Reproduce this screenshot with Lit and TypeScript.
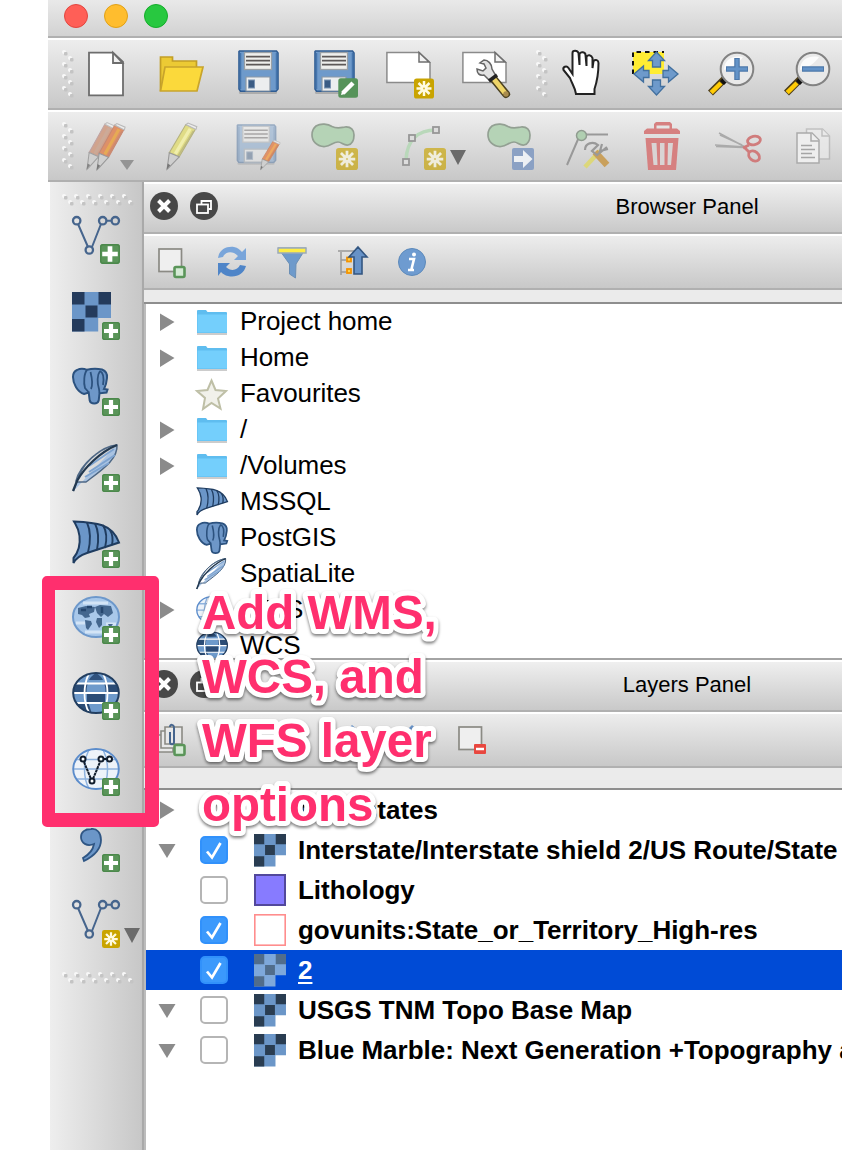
import { LitElement, html, svg, css, nothing } from "lit";
import { customElement, property } from "lit/decorators.js";

const plusBadge = (x: number, y: number, s: number) => svg`
  <g transform="translate(${x} ${y}) scale(${s / 18})">
    <rect width="18" height="18" rx="2.6" fill="#5a9559"/>
    <rect x=".7" y=".7" width="16.6" height="16.6" rx="2.2" fill="none" stroke="#4b884b" stroke-width="1.2"/>
    <path d="M9 2v14M2 9h14" stroke="#fff" stroke-width="4.2"/>
  </g>`;

const starBadge = (x: number, y: number, s: number) => svg`
  <g transform="translate(${x} ${y}) scale(${s / 20})">
    <rect width="20" height="20" rx="2.6" fill="#c9a400"/>
    <path d="M10 2.500v15M2.500 10h15M4.500 4.500l11 11M15.500 4.500l-11 11" stroke="#fffbe0" stroke-width="2.500"/>
    <circle cx="10" cy="10" r="3.500" fill="#fffbe0"/>
    <circle cx="10" cy="10" r="1" fill="#d8bd40"/>
  </g>`;

const floppy = svg`
  <rect x="5" y="41" width="38" height="3" rx="1.500" fill="#888" opacity=".5"/>
  <path d="M5.500 1h37l1.500 2v36l-2 2.300H6.500L5 39V1.500z" fill="#6e9acb" stroke="#2f5c93" stroke-width="1.600"/>
  <path d="M6.500 3v36M42.500 3v36" stroke="#4575ad" stroke-width="1.500"/>
  <rect x="10.500" y="2.500" width="27" height="17" fill="#efefed" stroke="#9aa0a6" stroke-width="1.300"/>
  <path d="M12 6.700h24M12 10.700h24M12 14.700h24" stroke="#5d5858" stroke-width="1.700"/>
  <path d="M12 41V27h24v14z" fill="#eceeef" stroke="#8b98a5" stroke-width="1.200"/>
  <rect x="14.500" y="30" width="6" height="8" fill="#3b5c84" stroke="#7b94b2" stroke-width="1"/>`;

const sheet = svg`
  <path d="M.9 2.500H33l11 10v20H.9z" fill="#fff" stroke="#8a8a8a" stroke-width="1.500"/>
  <path d="M33 2.500V12h10z" fill="#f2f2f2" stroke="#6f6f6f" stroke-width="1.500"/>`;

const blob = svg`
  <path d="M6 4C11 1 18 2 22 4.500c5 2.500 9 1 13 .5 6-.5 9 3 9 8s-1 9-6 10c-5 .5-6-3-10-3-5 0-7 4-13 4.500C7 25 2 19 2 13c0-4 1.500-7 4-9z"
    fill="#b5d3b6" stroke="#93a093" stroke-width="1.700"/>`;

const pencil = (body: string, dark: string, mid: string) => svg`
  <path d="M18 2l9 4-15 27-9-4z" fill="${body}" stroke="${dark}" stroke-width="1"/>
  <path d="M22 6L8.500 30" stroke="${mid}" stroke-width="3"/>
  <path d="M25 8L11 32" stroke="${dark}" stroke-width="1.500" opacity=".7"/>
  <path d="M3 29l9 4-8.500 9.500L1 45z" fill="#cfcfcf" stroke="#999" stroke-width="1"/>
  <path d="M1.500 39.500L4 41l-3.500 4.500z" fill="#777"/>
  <path d="M18 2l2-1.500 8 3.500-.8 2.800z" fill="#ececec" stroke="#b9b9b9" stroke-width="1"/>`;

const vector = (c: string) => svg`
  <g stroke="${c}" stroke-width="2" fill="none">
    <path d="M6 8l10 23M20 31L29 8M34 4.700h6"/>
    <circle cx="4.700" cy="4.700" r="3.700" stroke-width="2.300"/><circle cx="30.700" cy="4.700" r="3.700" stroke-width="2.300"/>
    <circle cx="43.300" cy="4.700" r="3.700" stroke-width="2.300"/><circle cx="17.300" cy="34" r="3.700" stroke-width="2.300"/>
  </g>`;

const elephant = svg`
  <path d="M5 2C8 .3 12 .5 15 1.800 20 .5 25 .5 30 1.500c4 1.500 5.500 4 5 8.500-.3 4-1.500 8-3 11l3.500.5-1 3-7 .8-.8 7.200c-1 4-8 4-9 0l-1-8-4.500 1.500C5 24 1 15 1 9 1 5 2.500 3 5 2z" fill="#6e97c8" stroke="#2c527f" stroke-width="2"/>
  <path d="M15 2c-3 3-3.500 13-2 18l3.500 4M19 21c2-4 .5-13-.5-17M28 3c-3 4-3 12-1 18l.5 4M28 3c4 2 4 8 3 14" fill="none" stroke="#2c527f" stroke-width="1.800"/>`;

const feather = svg`
  <path d="M45 1C33 2 14 14 7 32L1.500 47M45 1c1 14-14 24-31 37H6L4 37C8 20 30 2 45 1z" fill="#a9c3e2" stroke="#4f6885" stroke-width="1.500"/>
  <path d="M42 5L17 22M43 11L17 28M37 19L13 33" stroke="#7da3d0" stroke-width="2"/>
  <path d="M45 1C28 8 12 24 5 37l-4 10" fill="none" stroke="#22384f" stroke-width="2.200"/>`;

const fin = svg`
  <path d="M2 1.500c22 1 38 2 45 21L15 33C9 35 4 38 1.500 43v-5c5-6 7-13 6-22C6.500 8 4 5 2 1.500z" fill="#6b96c8" stroke="#1f3c60" stroke-width="2"/>
  <path d="M15 2.500c4 9 4 18 1 30M23 3.500c4 8 4 16 2 26.500M31 5c4 7 4 15 2 23M38 10c3 5 3 10 2 15" stroke="#1f3c60" stroke-width="1.900" fill="none"/>`;

const globeGrid = svg`
  <path d="M17 1.500c-6 12-6 28 0 39M31 1.500c6 12 6 28 0 39M4 11.500h40M1 21h46M4 31h40" fill="none"/>`;

const globeWms = svg`
  <ellipse cx="24" cy="21" rx="23" ry="20" fill="#a9c8ea" stroke="#6d98cb" stroke-width="2"/>
  <path d="M11 7h25M4 27h9M34 28h10M13 36h22" stroke="#d3e4f6" stroke-width="3"/>
  <path d="M6 12l8-2 9 1-1 5-5 2 1 3-5 1-3-3-4-1zM13 24l6 1 1 3-4 6-2-2zM23 11l5-2 11 1 2 7-5 4-4-3-3 3-4-4zM25 22h5v7l-3 3-3-6zM36 28h5l-3 4z" fill="#44678f"/>
  <path d="M15 11h5M30 11v6M9 14h5" stroke="#25466e" stroke-width="2.500"/>`;

const globeWcs = svg`
  <ellipse cx="24" cy="21" rx="22.800" ry="20" fill="#6e9acb"/>
  <path d="M17 8C18 5 21 3 24 1c3 2 6 4 7 7z" fill="#2f527e"/>
  <path d="M4.500 11.500h11.500c-1.500 3-1.500 6-1.500 9.500H1.500c0-4 1-7 3-9.500zM43.500 11.500H32c1.500 3 1.500 6 1.500 9.500h13c0-4-1-7-3-9.500zM15 21h18v10H15zM5 31h11.500l3 9.500C12 39 7 35 5 31z" fill="#2b4c76"/>
  <g stroke="#fff" stroke-width="1.800">${globeGrid}</g>
  <ellipse cx="24" cy="21" rx="22.800" ry="20" fill="none" stroke="#223e60" stroke-width="2"/>`;

const globeWfs = svg`
  <ellipse cx="24" cy="21" rx="22.800" ry="20" fill="#eef3f9"/>
  <g stroke="#8fb3de" stroke-width="1.500">${globeGrid}</g>
  <ellipse cx="24" cy="21" rx="22.800" ry="20" fill="none" stroke="#5b8ccb" stroke-width="1.900"/>
  <g stroke="#111c2b" stroke-width="2" fill="#fff"><path d="M12 14l7 17M21 31l7-17M31 11h4" stroke-dasharray="3 .6"/>
  <circle cx="11" cy="11" r="2.500"/><circle cx="29" cy="11" r="2.500"/><circle cx="37.500" cy="11" r="2.500"/><circle cx="20" cy="33" r="2.500"/></g>`;

const rasterCells = (dark: string, light: string) => svg`
  <path d="M0 0h39v26H26.200V39.500H0z" fill="${light}"/>
  <path d="M0 0h12.500v12.500H0zM26.500 0H39v12.500H26.500zM13.500 13.500h12v12h-12zM0 27h12.500v12.500H0z" fill="${dark}"/>`;

const lens = svg`
  <path d="M16.500 29L2.500 43" stroke="#4d3d1a" stroke-width="7"/>
  <path d="M13 33L3.200 42.700" stroke="#ffcb05" stroke-width="4.500"/>
  <path d="M12 31l5-5 4 4-5 5z" fill="#111"/>
  <circle cx="29" cy="19" r="16.300" fill="#e9e9e9" stroke="#828282" stroke-width="2"/>
  <path d="M16 20C16 10 24 5 35 7c-4 6-11 11-19 13z" fill="#fff" opacity=".8"/>`;

const addGlyph = svg`<rect x="17" y="19" width="10" height="10" rx="1.500" fill="#d5ead5" stroke="#5a9559" stroke-width="2.600"/>`;

const icons: Record<string, unknown> = {
  doc: svg`<path d="M7 2.700h24L41 12v33.300H7z" fill="#fff" stroke="#6d6d6d" stroke-width="1.800"/><path d="M31 2.700V13h9.500z" fill="#f0f0f0" stroke="#6d6d6d" stroke-width="1.800"/>`,
  folder: svg`<path d="M2.500 41V7h12v4h24v6" fill="#ecca34" stroke="#c29e26" stroke-width="1.700"/><path d="M7 17h38l-6 24H2.500z" fill="#fbd93b" stroke="#c8a42c" stroke-width="1.700"/>`,
  save: floppy,
  saveAs: svg`${floppy}<rect x="28.300" y="28.300" width="19.700" height="19.500" rx="2.500" fill="#56935a"/><path d="M33 43l10-10" stroke="#fff" stroke-width="4.500"/><path d="M32 41l3 3-4 1z" fill="#fff"/>`,
  composer: svg`${sheet}${starBadge(28, 28.500, 20)}`,
  manager: svg`${sheet}<path d="M30 27l14 17" stroke="#4b4120" stroke-width="8" stroke-linecap="round"/><path d="M31 28l12 15" stroke="#efd568" stroke-width="5"/><circle cx="44" cy="44" r="2.700" fill="#a98c4d"/>
    <path d="M22 10c4 0 8 4 8 9l4 7-6 5-6-6c-5 1-7-2-7-6l6 2 3-3-2-4-4-1z" fill="#e2e2e2" stroke="#646464" stroke-width="1.500"/><path d="M27 31l8-6" stroke="#222" stroke-width="3.500"/>`,
  hand: svg`<path transform="translate(6 0)" d="M14 44c-1-7-4-10-6-16L1.500 20c-1-3 3-5 5-2l4 6V3c0-3 5-3 6 0l1 12V4c1-3 6-2 6 1l1 11V7c1-3 5-2 6 1v10l1-7c2-2 5-1 5 2 0 10-1 17-4 26v5z" fill="#fff" stroke="#222" stroke-width="2"/>`,
  pan: svg`<path d="M1 2h31v22H1z" fill="#ffed33"/><path d="M1 24V2h31" fill="none" stroke="#111" stroke-width="2" stroke-dasharray="4.500 4"/>
    <g fill="#6e9acb" stroke="#42709f" stroke-width="1.300"><path d="M24.500 2l8 8.500h-4V17h-8v-6.500h-4z"/><path d="M24.500 45l8-8.500h-4V30h-8v6.500h-4z"/><path d="M2 24l9.500-8v4.500H17v7h-5.500V32z"/><path d="M46 24l-9.500-8v4.500H31v7h5.500V32z"/></g>`,
  zoomIn: svg`${lens}<path d="M29 8v22M18 19h22" stroke="#4d78aa" stroke-width="5.500"/><path d="M29 9v20M19 19h20" stroke="#6393c8" stroke-width="3"/>`,
  zoomOut: svg`${lens}<path d="M18 19h22" stroke="#4d78aa" stroke-width="5.500"/><path d="M19 19h20" stroke="#6393c8" stroke-width="3"/>`,

  pencils: svg`<g transform="translate(4 0) scale(1.05)" opacity=".85">${pencil("#cf9a80", "#b99", "#c9a18c")}</g><g transform="translate(14 1) scale(1.04)">${pencil("#de9068", "#c78872", "#e6aa55")}</g>
    <path d="M38 38h14l-7 10z" fill="#949494"/>`,
  pencil: svg`<g transform="translate(8 .5) scale(1.1 1.04)">${pencil("#e0dc86", "#b5b27e", "#f0eeac")}</g>`,
  saveEdit: svg`<g opacity=".42" transform="translate(-1.500 2) scale(.98 .93)">${floppy}</g><g transform="translate(26 18) scale(.72 .66)">${pencil("#e09268", "#c78560", "#ecaa60")}</g>`,
  blobStar: svg`${blob}<g opacity=".65">${starBadge(26, 26, 22)}</g>`,
  curve: svg`<path d="M8 38C9 18 20 8 38 8" fill="none" stroke="#b9d8ba" stroke-width="3.500"/><g fill="#ddd" stroke="#979797" stroke-width="1.800"><rect x="5" y="37" width="6" height="6"/><rect x="11" y="13" width="6" height="6"/><rect x="35" y="5" width="6" height="6"/></g><g opacity=".65">${starBadge(26, 26, 22)}</g>`,
  blobMove: svg`${blob}<rect x="26" y="26" width="22" height="22" rx="2" fill="#8ba1c4"/><path d="M28 34h9v-6l9.500 9-9.500 9v-6h-9z" fill="#edf0f4"/>`,
  node: svg`<path d="M5 43L17 15M23 12.500h23" stroke="#999" stroke-width="2"/><circle cx="19.500" cy="13.500" r="5" fill="#b0cfb1" stroke="#909c90" stroke-width="1.500"/>
    <path d="M23 45l15-16" stroke="#dcd77a" stroke-width="4.500"/><path d="M33 30l12 13" stroke="#c9a05c" stroke-width="6.500"/><path d="M23 28c0-7 8-9 13-5l-6 6 5 4 10-8M40 22l-2 7 8-2" fill="none" stroke="#999" stroke-width="2.200"/>`,
  trash: svg`<g fill="#d68080"><path d="M6 12V9l3-2.500h7V2l2-2h14l2 2v4.500h5l3 2.500v3zM18.500 3.500v3h13v-3z" fill-rule="evenodd"/><path d="M7.500 16h33L38 48H10z"/></g><path d="M13.500 21h5l1 22h-4zM22 21h4.500v22H22zM30 21h5l-2 22h-3.500z" fill="#d9d4d4"/>`,
  scissors: svg`<path d="M5 11l27 14.500M1 23l31 2M6 13l22 10M2 24.500l27 1" stroke="#aaa" stroke-width="1.600"/><g fill="none" stroke="#d07c7c" stroke-width="2.800"><ellipse cx="40" cy="18.500" rx="6.500" ry="4.200" transform="rotate(-12 40 18.500)"/><ellipse cx="40" cy="34" rx="6" ry="4.500" transform="rotate(40 40 34)"/><path d="M29 26l6-3M31 26l4 4"/></g>`,
  copy: svg`<g fill="#eee" stroke="#aaa" stroke-width="1.500"><g opacity=".6"><path d="M16.500 7h16l7 7v23h-23z"/><path d="M32 7v7h7"/></g><path d="M7 11h15l7 7v23H7z"/><path d="M21 11v8h8"/></g><path d="M11 23.500h11M11 27.500h14M11 31.500h11M11 35.500h14" stroke="#a5a5a5" stroke-width="1.500"/>`,

  addVector: svg`${vector("#46658d")}${plusBadge(28, 28, 20)}`,
  addRaster: svg`${rasterCells("#243b5c", "#6b96c8")}${plusBadge(30, 30, 18)}`,
  addPostgis: svg`${elephant}${plusBadge(30, 30, 18)}`,
  addSpatialite: svg`${feather}${plusBadge(30, 30, 18)}`,
  addMssql: svg`${fin}${plusBadge(30, 30, 18)}`,
  addWms: svg`${globeWms}${plusBadge(30, 30, 18)}`,
  addWcs: svg`${globeWcs}${plusBadge(30, 30, 18)}`,
  addWfs: svg`${globeWfs}${plusBadge(30, 30, 18)}`,
  addText: svg`<path d="M19 5c6-1 10 4 10 11 0 9-7 16-17 21l-1-3c7-4 10-8 11-14-7 3-13-1-13-7 0-5 4-8 10-8z" fill="#6b96c8" stroke="#2f5684" stroke-width="1.800"/>${plusBadge(30, 30, 18)}`,
  newVector: svg`${vector("#46658d")}${starBadge(30, 30, 18)}`,

  close: svg`<circle cx="14" cy="14" r="14" fill="#484848"/><path d="M8.500 8.500l11 11M19.500 8.500l-11 11" stroke="#fff" stroke-width="4"/>`,
  float: svg`<circle cx="14" cy="14" r="14" fill="#484848"/><g fill="none" stroke="#fff" stroke-width="1.800"><path d="M11.500 12V9H21v8h-2.500"/><rect x="7" y="12.500" width="11" height="8.500"/></g>`,

  addSel: svg`<rect x="3" y="3" width="22.500" height="22.500" fill="#efefef" stroke="#8b8a84" stroke-width="1.700"/><g transform="translate(1.500 2)">${addGlyph}</g>`,
  refresh: svg`<path d="M2 12C3 4 10 0 18 1c4 .5 6 3 8 5l4-4v12H18l4-4c-6-6-13-4-15 1z" fill="#79a5da"/><path d="M30 20c-2 8-10 12-18 10-3-.5-5-2-7-4l-3 4V17h12l-4 4c5 5 12 3 14-2z" fill="#4f85c8"/>`,
  filter: svg`<path d="M2 2h28L20 18l-.5 14-6-4V18z" fill="#6e9acb" stroke="#6b8fb5" stroke-width="1"/><path d="M2 2h28v5H2z" fill="#ffee45" stroke="#9cabb8" stroke-width="1.500"/>`,
  collapse: svg`<path d="M2 5h17M5 6v23M5 14h5M5 26h5" stroke="#999" stroke-width="1.500"/><rect x="11" y="11.500" width="4" height="4" fill="#ffd34d" stroke="#f49300" stroke-width="1.800"/><rect x="11" y="23" width="4" height="4" fill="#ffd34d" stroke="#f49300" stroke-width="1.800"/><path d="M22 1l9 10h-5v17h-8V11h-5z" fill="#6792c7" stroke="#335681" stroke-width="1.600"/>`,
  info: svg`<circle cx="16" cy="16" r="13.500" fill="#6e9bd0" stroke="#5d8abb" stroke-width="1"/><path d="M13 13h5l-2.500 10M12 24h6" stroke="#fff" stroke-width="2.600" fill="none"/><circle cx="18" cy="8.500" r="2" fill="#fff"/>`,
  addGroup: svg`<g fill="#e8e8e8" stroke="#8b8a84" stroke-width="1.600"><path d="M2 11h15v17H2z"/><path d="M5 7h15v17H5z"/><path d="M9 3h17v17H9z"/></g><path d="M14 8v10c0 3 4 3 4 0V4c0-4-4-4-4-1" fill="none" stroke="#46658d" stroke-width="2"/><g transform="translate(1.500 2)">${addGlyph}</g>`,
  eye: svg`<path d="M2 17q12-10 22 0-10 10-22 0z" fill="#ddd" stroke="#555" stroke-width="2"/><path d="M22 20h12l-6 9z" fill="#222"/>`,
  expandAll: svg`<path d="M16 1l8 7v14H9V8z" fill="#6792c7"/>`,
  removeSel: svg`<rect x="3" y="3" width="22.500" height="22.500" fill="#efefef" stroke="#8b8a84" stroke-width="1.700"/><rect x="18" y="20" width="12" height="10" rx="1" fill="#e8473f"/><path d="M20 25h8" stroke="#fff" stroke-width="2.500"/>`,
  blank: svg``,

  dir: svg`<path d="M1 6V5q0-1 1-1h8l1.500 2H30q1 0 1 1v20H1z" fill="#5fbdef"/><path d="M1.500 8.500h29.500V26.500H1.500z" fill="#74cffc"/><path d="M1 28h30" stroke="#bbb" stroke-width="1.500"/>`,
  star: svg`<path d="M15.500 2.500l4 9.500 10.500 1-8 7.500 2.500 10-9-5.500-8.500 6 2-11L1 13l10.500-1z" fill="#f1f1ea" stroke="#bebfa6" stroke-width="2"/>`,
  fin: svg`<g transform="translate(0 1) scale(.67 .65)">${fin}</g>`,
  elephant: svg`<g transform="translate(0 0) scale(.88)">${elephant}</g>`,
  feather: svg`<g transform="scale(.66)">${feather}</g>`,
  wms: svg`<g transform="translate(0 2) scale(.67)">
    <ellipse cx="24" cy="21" rx="22.800" ry="20" fill="#eef3f9"/><g stroke="#8fb3de" stroke-width="2">${globeGrid}</g>
    <ellipse cx="24" cy="21" rx="22.800" ry="20" fill="none" stroke="#5b8ccb" stroke-width="2"/></g>`,
  wcs: svg`<g transform="translate(0 1.500) scale(.67)">${globeWcs}</g>`,
  raster: svg`<g transform="scale(.82)">${rasterCells("#293c51", "#6b96c8")}</g>`,
  rasterSel: svg`<g transform="scale(.82)">${rasterCells("#516d8b", "#7ea8da")}</g>`,
  purple: svg`<rect x="1" y="1" width="30" height="30" fill="#877bff" stroke="#52489c" stroke-width="2"/>`,
  outline: svg`<rect x=".8" y=".8" width="30.400" height="30.400" fill="#fff" stroke="#ff8d8d" stroke-width="1.600"/>`,
};

@customElement("q-icon")
class QIcon extends LitElement {
  @property() name = "blank";
  @property({ type: Number }) size = 48;
  static styles = css`
    :host { display: block; flex: none; }
    svg { display: block; overflow: visible; }
  `;
  render() {
    return html`<svg width=${this.size} height=${this.size} viewBox="0 0 ${this.size} ${this.size}">${icons[this.name]}</svg>`;
  }
}

@customElement("q-grip")
class QGrip extends LitElement {
  @property({ type: Boolean }) vertical = false;
  static styles = css`
    :host { display: block; flex: none; }
    svg { display: block; }
  `;
  render() {
    const n = this.vertical ? 4 : 6;
    const dots: unknown[] = [];
    const dot = (x: number, y: number) => svg`<circle cx=${x + 2} cy=${y + 2} r="2" fill="#f8f8f8"/><rect x=${x + 2} y=${y + 2} width="3.500" height="3.500" rx="1" fill="#c4c4c4"/>`;
    for (let i = 0; i < n; i++) {
      dots.push(this.vertical ? dot(0, i * 12) : dot(i * 12, 0));
      dots.push(this.vertical ? dot(6, 6 + i * 12) : dot(6 + i * 12, 6));
    }
    return this.vertical
      ? html`<svg width="12" height="48">${dots}</svg>`
      : html`<svg width="72" height="12">${dots}</svg>`;
  }
}

type Entry = { icon: string; label: string; arrow?: boolean };
const browserEntries: Entry[] = [
  { icon: "dir", label: "Project home", arrow: true },
  { icon: "dir", label: "Home", arrow: true },
  { icon: "star", label: "Favourites" },
  { icon: "dir", label: "/", arrow: true },
  { icon: "dir", label: "/Volumes", arrow: true },
  { icon: "fin", label: "MSSQL" },
  { icon: "elephant", label: "PostGIS" },
  { icon: "feather", label: "SpatiaLite" },
  { icon: "wms", label: "WMS", arrow: true },
  { icon: "wcs", label: "WCS" },
];

type Layer = { label: string; arrow?: "right" | "down"; check?: boolean; icon?: string; selected?: boolean };
const layers: Layer[] = [
  { label: "topp:states", arrow: "right" },
  { label: "Interstate/Interstate shield 2/US Route/State", arrow: "down", check: true, icon: "raster" },
  { label: "Lithology", check: false, icon: "purple" },
  { label: "govunits:State_or_Territory_High-res", check: true, icon: "outline" },
  { label: "2", check: true, icon: "rasterSel", selected: true },
  { label: "USGS TNM Topo Base Map", arrow: "down", check: false, icon: "raster" },
  { label: "Blue Marble: Next Generation +Topography a", arrow: "down", check: false, icon: "raster" },
];

const sideTools = ["addVector", "addRaster", "addPostgis", "addSpatialite", "addMssql", "addWms", "addWcs", "addWfs", "addText"];

@customElement("app-root")
class AppRoot extends LitElement {
  static styles = css`
    :host { display: block; position: relative; width: 842px; height: 1150px; overflow: hidden; background: #fff;
      font-family: "Liberation Sans", Arial, sans-serif; color: #000; }
    * { box-sizing: border-box; }
    .window { margin-left: 48px; height: 1150px; display: flex; flex-direction: column; }
    .titlebar { height: 38px; flex: none; display: flex; gap: 16px; padding: 4px 0 0 16px;
      background: linear-gradient(#e9e9e9, #d2d2d2); border-bottom: 2px solid #b0b0b0; }
    .light { width: 24px; height: 24px; border-radius: 50%; border: 1.500px solid; }
    .red { background: #ff5f57; border-color: #e2463f; }
    .amber { background: #ffbd2e; border-color: #e1a116; }
    .green { background: #28c840; border-color: #14ad2a; }
    .bar { height: 72px; flex: none; display: flex; align-items: flex-start; overflow: hidden;
      border-top: 2px solid #fff; border-bottom: 2px solid #b0b0b0; background: linear-gradient(#ededed, #c8c8c8); padding: 10px 0 0 14px; }
    .tools { display: flex; gap: 28px; padding-left: 8px; }
    .second-grip { padding-left: 26px; }
    .curve-tools { display: flex; gap: 4px; padding: 0 12px 0 40px; }
    .curve-tools .caret { margin-top: 28px; }
    .caret { display: block; flex: none; }
    .body { flex: 1; display: flex; min-height: 0; margin-left: 2px; }
    .sidebar { width: 96px; flex: none; padding: 12px 0 0 12px; border-right: 2px solid #bcbcbc;
      background: linear-gradient(90deg, #eeeeee, #c8c8c8 90px, #c5c5c5 91.500px, #a9a9a9 92px); }
    .side-tools { display: flex; flex-direction: column; gap: 28px; padding: 10px 0 24px 10px; }
    .side-row { display: flex; gap: 4px; }
    .side-row .caret { margin-top: 28px; }
    .panels { flex: 1; min-width: 0; display: flex; flex-direction: column; }
    .panel-title { height: 52px; flex: none; display: grid; grid-template-columns: 28px 28px 1fr; gap: 12px;
      padding: 8px 0 0 6px; margin-left: -2px; background: linear-gradient(#efefef, #c9c9c9);
      border-top: 2px solid #fff; border-bottom: 2px solid #b0b0b0; }
    .title { width: 270px; margin-left: 322px; text-align: center; font-size: 22px; line-height: 29px; white-space: nowrap; }
    .panel-bar { height: 56px; flex: none; display: flex; gap: 28px; padding: 10px 0 0 12px; margin-left: -2px;
      background: linear-gradient(#ededed, #c8c8c8); border-top: 2px solid #fff; border-bottom: 2px solid #b0b0b0; }
    .strip { height: 14px; flex: none; margin-left: -2px; background: #ebebeb; border-bottom: 2px solid #8e8e8e; }
    .layers-strip { height: 22px; }
    .tree { height: 354px; flex: none; overflow: hidden; background: #fff; }
    .entry { height: 36px; display: grid; grid-template-columns: 38px 32px 1fr; align-items: center; padding-left: 12px; }
    .entry .name { padding-left: 12px; font-size: 26px; line-height: 34px; white-space: nowrap; letter-spacing: -.06px; margin-top: -2px; }
    .divider { height: 2px; flex: none; margin-left: -2px; background: #a4a4a4; }
    .layer { height: 40px; display: grid; grid-template-columns: 42px 28px 26px 32px 1fr; align-items: center; padding-left: 12px; }
    .layer .name { padding-left: 12px; font-size: 26px; font-weight: bold; line-height: 36px; white-space: nowrap; letter-spacing: -.02px; }
    .selected { background: #004bd6; color: #fff; }
    .selected .name { text-decoration: underline; text-decoration-thickness: 2px; text-underline-offset: 3px; text-decoration-skip-ink: none; }
    .check { width: 28px; height: 28px; border-radius: 5px; border: 2px solid #b5b5b5; background: #fff; }
    .on { border-color: #3191fb; background: #3b99fc; }
    .check svg { display: block; margin: -2px; }
    .frame { position: absolute; left: 42px; top: 576px; width: 117px; height: 251px; border: 14px solid #ff2f6e; border-left-width: 13px; border-radius: 5px; }
    .note { position: absolute; left: 180px; top: 570px; overflow: visible; filter: drop-shadow(0 2px 1.500px rgba(0, 0, 0, .5)); }
    .note-text { font-family: "Liberation Sans", Arial, sans-serif; font-weight: bold; font-size: 47.500px; fill: #ff2f6e; stroke: #fff; stroke-width: 10px; stroke-linejoin: round; paint-order: stroke fill; }
  `;

  caret(w: number, h: number, color: string) {
    return html`<svg class="caret" width=${w} height=${h}><path d="M0 0h${w}L${w / 2} ${h}z" fill=${color}/></svg>`;
  }
  tri(dir?: "right" | "down") {
    if (!dir) return html`<span></span>`;
    return html`<svg width="18" height="18">${dir === "right"
      ? svg`<path d="M2 .5L16.500 9L2 18z" fill="#8b8b8b"/>`
      : svg`<path d="M.5 3h17L9 17z" fill="#8b8b8b"/>`}</svg>`;
  }
  icon(name: string, size = 48) {
    return html`<q-icon name=${name} size=${size}></q-icon>`;
  }

  render() {
    return html`
      <div class="window">
        <div class="titlebar"><span class="light red"></span><span class="light amber"></span><span class="light green"></span></div>
        <div class="bar">
          <q-grip vertical></q-grip>
          <div class="tools">${["doc", "folder", "save", "saveAs", "composer", "manager"].map((n) => this.icon(n))}</div>
          <div class="second-grip"><q-grip vertical></q-grip></div>
          <div class="tools">${["hand", "pan", "zoomIn", "zoomOut"].map((n) => this.icon(n))}</div>
        </div>
        <div class="bar">
          <q-grip vertical></q-grip>
          <div class="tools">${["pencils", "pencil", "saveEdit", "blobStar"].map((n) => this.icon(n))}</div>
          <div class="curve-tools">${this.icon("curve")}${this.caret(16, 15, "#6b6b6b")}</div>
          <div class="tools">${["blobMove", "node", "trash", "scissors", "copy"].map((n) => this.icon(n))}</div>
        </div>
        <div class="body">
          <div class="sidebar">
            <q-grip></q-grip>
            <div class="side-tools">
              ${sideTools.map((n) => this.icon(n))}
              <div class="side-row">${this.icon("newVector")}${this.caret(16, 15, "#6b6b6b")}</div>
            </div>
            <q-grip></q-grip>
          </div>
          <div class="panels">
            <div class="panel-title">${this.icon("close", 28)}${this.icon("float", 28)}<div class="title">Browser Panel</div></div>
            <div class="panel-bar">${["addSel", "refresh", "filter", "collapse", "info"].map((n) => this.icon(n, 32))}</div>
            <div class="strip"></div>
            <div class="tree">
              ${browserEntries.map((e) => html`<div class="entry">${this.tri(e.arrow ? "right" : undefined)}${this.icon(e.icon, 32)}<span class="name">${e.label}</span></div>`)}
            </div>
            <div class="divider"></div>
            <div class="panel-title">${this.icon("close", 28)}${this.icon("float", 28)}<div class="title">Layers Panel</div></div>
            <div class="panel-bar">${["addGroup", "eye", "blank", "expandAll", "expandAll", "removeSel"].map((n) => this.icon(n, 32))}</div>
            <div class="strip layers-strip"></div>
            <div>
              ${layers.map((l) => html`<div class="layer ${l.selected ? "selected" : ""}">
                ${this.tri(l.arrow)}
                ${l.check === undefined ? html`<span></span>` : html`<span class="check ${l.check ? "on" : ""}">${l.check
                  ? html`<svg width="28" height="28"><path d="M7 15.500l5 6L20.500 7" fill="none" stroke="#fff" stroke-width="2.700"/></svg>` : nothing}</span>`}
                <span></span>
                ${l.icon ? this.icon(l.icon, 32) : html`<span></span>`}
                <span class="name">${l.label}</span>
              </div>`)}
            </div>
          </div>
        </div>
      </div>
      <div class="frame"></div>
      <svg class="note" width="280" height="280">
        <text class="note-text">
          ${["Add WMS,", "WCS, and", "WFS layer", "options"].map((t, i) => svg`<tspan x="22" y=${59 + i * 64}>${t}</tspan>`)}
        </text>
      </svg>`;
  }
}
